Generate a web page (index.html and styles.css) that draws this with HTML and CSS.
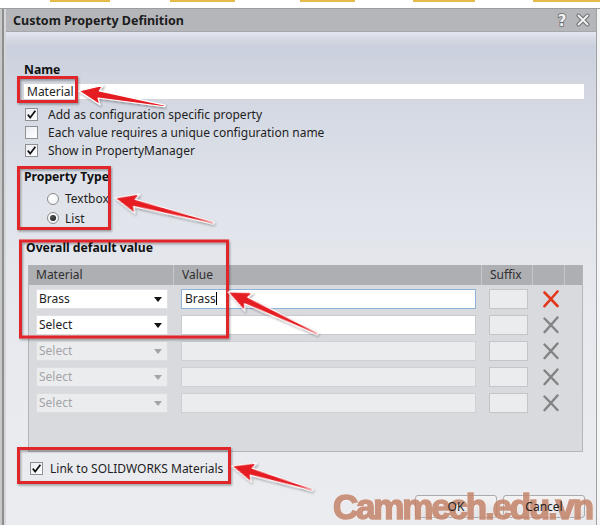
FILE: index.html
```html
<!DOCTYPE html>
<html>
<head>
<meta charset="utf-8">
<link rel="stylesheet" href="styles.css">
</head>
<body>
<div class="strip"></div>
<div class="window">
  <div class="lframe"></div>
  <div class="dialog">
    <div class="titlebar">
      <span class="title">Custom Property Definition</span>
      <span class="tb-icons">
        <svg class="tb-help" width="12" height="16" viewBox="0 0 12 16"><text x="6" y="13.5" text-anchor="middle" class="help-glyph">?</text></svg>
        <svg class="tb-close" width="14" height="14" viewBox="0 0 14 14"><path d="M2.5 2.5 L11.5 11.5 M11.5 2.5 L2.5 11.5" stroke="#6e6f72" stroke-width="4" stroke-linecap="round"/><path d="M2.5 2.5 L11.5 11.5 M11.5 2.5 L2.5 11.5" stroke="#f2f2f2" stroke-width="2" stroke-linecap="round"/></svg>
      </span>
    </div>
    <div class="content">
      <div class="label">Name</div>
      <div class="textbox name-box">Material</div>
      <div class="checks">
        <div class="row"><span class="cb"><svg width="11" height="11" viewBox="0 0 11 11"><path d="M1.8 5.6 L4.2 8.6 L9.4 1.8" fill="none" stroke="#111" stroke-width="1.7"/></svg></span><span>Add as configuration specific property</span></div>
        <div class="row"><span class="cb"></span><span>Each value requires a unique configuration name</span></div>
        <div class="row"><span class="cb"><svg width="11" height="11" viewBox="0 0 11 11"><path d="M1.8 5.6 L4.2 8.6 L9.4 1.8" fill="none" stroke="#111" stroke-width="1.7"/></svg></span><span>Show in PropertyManager</span></div>
      </div>
      <div class="label ptype">Property Type</div>
      <div class="radios">
        <div class="rrow"><span class="rb"></span><span>Textbox</span></div>
        <div class="rrow"><span class="rb on"></span><span>List</span></div>
      </div>
      <div class="label odv">Overall default value</div>
      <div class="table">
        <div class="thead">
          <div class="th">Material</div>
          <div class="th">Value</div>
          <div class="th">Suffix</div>
          <div class="th"></div>
          <div class="th"></div>
        </div>
        <div class="tbody">
          <div class="tr">
            <div class="td"><div class="select">Brass<i class="tri"></i></div></div>
            <div class="td"><div class="vbox focus">Brass<span class="caret"></span></div></div>
            <div class="td"><div class="sbox"></div></div>
            <div class="td"><svg class="xicon" width="18" height="18" viewBox="0 0 18 18"><path d="M2.5 2.5 Q8 8 15.5 16 M15.5 1.5 Q9 9 2.5 16.2" fill="none" stroke="#e2391d" stroke-width="2.6" stroke-linecap="round"/></svg></div>
            <div class="td"></div>
          </div>
          <div class="tr">
            <div class="td"><div class="select">Select<i class="tri"></i></div></div>
            <div class="td"><div class="vbox"></div></div>
            <div class="td"><div class="sbox"></div></div>
            <div class="td"><svg class="xicon" width="18" height="18" viewBox="0 0 18 18"><path d="M2.5 2.5 Q8 8 15.5 16 M15.5 1.5 Q9 9 2.5 16.2" fill="none" stroke="#828384" stroke-width="2.4" stroke-linecap="round"/></svg></div>
            <div class="td"></div>
          </div>
          <div class="tr">
            <div class="td"><div class="select dis">Select<i class="tri"></i></div></div>
            <div class="td"><div class="vbox dis"></div></div>
            <div class="td"><div class="sbox"></div></div>
            <div class="td"><svg class="xicon" width="18" height="18" viewBox="0 0 18 18"><path d="M2.5 2.5 Q8 8 15.5 16 M15.5 1.5 Q9 9 2.5 16.2" fill="none" stroke="#828384" stroke-width="2.4" stroke-linecap="round"/></svg></div>
            <div class="td"></div>
          </div>
          <div class="tr">
            <div class="td"><div class="select dis">Select<i class="tri"></i></div></div>
            <div class="td"><div class="vbox dis"></div></div>
            <div class="td"><div class="sbox"></div></div>
            <div class="td"><svg class="xicon" width="18" height="18" viewBox="0 0 18 18"><path d="M2.5 2.5 Q8 8 15.5 16 M15.5 1.5 Q9 9 2.5 16.2" fill="none" stroke="#828384" stroke-width="2.4" stroke-linecap="round"/></svg></div>
            <div class="td"></div>
          </div>
          <div class="tr">
            <div class="td"><div class="select dis">Select<i class="tri"></i></div></div>
            <div class="td"><div class="vbox dis"></div></div>
            <div class="td"><div class="sbox"></div></div>
            <div class="td"><svg class="xicon" width="18" height="18" viewBox="0 0 18 18"><path d="M2.5 2.5 Q8 8 15.5 16 M15.5 1.5 Q9 9 2.5 16.2" fill="none" stroke="#828384" stroke-width="2.4" stroke-linecap="round"/></svg></div>
            <div class="td"></div>
          </div>
        </div>
      </div>
      <div class="row link"><span class="cb"><svg width="11" height="11" viewBox="0 0 11 11"><path d="M1.8 5.6 L4.2 8.6 L9.4 1.8" fill="none" stroke="#111" stroke-width="1.7"/></svg></span><span>Link to SOLIDWORKS Materials</span></div>
      <div class="buttons">
        <div class="btn"><span class="btn-label">OK</span></div>
        <div class="btn"><span class="btn-label">Cancel</span></div>
      </div>
    </div>
  </div>
  <div class="rframe"></div>
</div>

<svg class="annot" width="600" height="525" viewBox="0 0 600 525">
  <defs>
    <filter id="sh" x="-10%" y="-10%" width="130%" height="140%">
      <feDropShadow dx="1" dy="1.5" stdDeviation="1" flood-color="#000" flood-opacity="0.35"/>
    </filter>
  </defs>
  <g fill="none" stroke="#e0262b" stroke-width="3" filter="url(#sh)">
    <rect x="18.5" y="77.5" width="58" height="24"/>
    <rect x="18.5" y="167.5" width="91" height="61"/>
    <rect x="20.5" y="241" width="207" height="96"/>
    <rect x="18.5" y="448.5" width="211" height="34"/>
  </g>
  <g fill="#e51d23" stroke="#fff" stroke-width="1.2" stroke-linejoin="round" filter="url(#sh)">
    <polygon transform="translate(79,91) rotate(9.9)" points="0,0 23,-10 20,-3.6 87,-0.8 87,0.8 20,3.6 23,10"/>
    <polygon transform="translate(115,198) rotate(14.2)" points="0,0 23,-10 20,-3.6 102,-0.8 102,0.8 20,3.6 23,10"/>
    <polygon transform="translate(228,292) rotate(25)" points="0,0 23,-10 20,-3.6 99,-0.8 99,0.8 20,3.6 23,10"/>
    <polygon transform="translate(232,466) rotate(16.5)" points="0,0 23,-10 20,-3.6 84,-0.8 84,0.8 20,3.6 23,10"/>
  </g>
</svg>
<div class="watermark">Cammech.edu.vn</div>
</body>
</html>
```

FILE: styles.css
```css
* { box-sizing: border-box; }
html, body { margin: 0; padding: 0; }
body {
  width: 600px;
  height: 525px;
  overflow: hidden;
  position: relative;
  background: #ffffff;
  font-family: "Noto Sans", "Open Sans", sans-serif;
  font-size: 12px;
  color: #1e1e1e;
}
.strip {
  height: 8px;
  background:
    linear-gradient(90deg, transparent 50px, #e7b948 50px, #e7b948 110px, transparent 110px, transparent 170px, #e7b948 170px, #e7b948 235px, transparent 235px, transparent 300px, #e7b948 300px, #e7b948 355px, transparent 355px, transparent 413px, #e7b948 413px, #e7b948 475px, transparent 475px, transparent 533px, #e7b948 533px) top / 100% 2px no-repeat,
    #ffffff;
}
.window {
  display: flex;
  height: 517px;
  border-top: 1px solid #9c9da0;
}
.lframe {
  width: 6px;
  background: linear-gradient(90deg, #c8c8c8 0 2px, #8e8e8e 2px 4px, #d4d6da 4px);
}
.rframe {
  width: 3px;
  background: #f6f6f6;
}
.dialog {
  width: 591px;
  display: flex;
  flex-direction: column;
  border-right: 1px solid #9fa0a4;
}
.titlebar {
  height: 23px;
  background: #b5b6ba;
  border-bottom: 1px solid #a6a7ab;
  display: flex;
  align-items: center;
  padding: 0 6px 0 7px;
}
.title {
  flex: 1;
  font-weight: bold;
  font-size: 12.5px;
  color: #1c1c1c;
}
.tb-icons {
  display: flex;
  align-items: center;
  gap: 8px;
}
.help-glyph {
  font-family: "DejaVu Sans", sans-serif;
  font-weight: bold;
  font-size: 15px;
  fill: #f2f2f2;
  stroke: #6e6f72;
  stroke-width: 1.6px;
  paint-order: stroke;
}
.content {
  flex: 1;
  background: linear-gradient(180deg, #e4e7ee 0px, #d6dbe5 6px, #cad0dd 14px, #d1d6e1 50px, #e0e3ea 170px, #e7e9ee 280px, #eaecf0 100%);
  padding: 30px 11px 0 18px;
  display: flex;
  flex-direction: column;
}
.label {
  font-weight: bold;
  font-size: 12.2px;
  line-height: 16px;
  height: 16px;
  color: #111;
}
.textbox {
  margin-top: 5px;
  margin-left: -1px;
  height: 17px;
  background: #fff;
  border: 1px solid #d4d6db;
  padding-left: 3px;
  line-height: 15px;
}
.checks {
  margin-top: 5px;
}
.row {
  height: 18px;
  display: flex;
  align-items: center;
  padding-left: 1px;
}
.cb {
  width: 13px;
  height: 13px;
  border: 1px solid #8f9092;
  background: linear-gradient(135deg, #e9ecf2, #ffffff);
  display: inline-flex;
  align-items: center;
  justify-content: center;
  margin-right: 10px;
  flex: none;
}
.ptype {
  margin-top: 10px;
}
.radios {
  margin-top: 4px;
  padding-left: 23px;
}
.rrow {
  height: 19.5px;
  display: flex;
  align-items: center;
}
.rb {
  width: 12px;
  height: 12px;
  border-radius: 50%;
  border: 1px solid #8a8b8d;
  background: radial-gradient(circle at 40% 35%, #ffffff, #eceef2);
  margin-right: 6px;
  display: inline-flex;
  align-items: center;
  justify-content: center;
}
.rb.on::after {
  content: "";
  width: 6px;
  height: 6px;
  border-radius: 50%;
  background: radial-gradient(circle at 40% 35%, #555, #111);
}
.odv {
  margin-top: 12px;
  margin-left: 2px;
}
.table {
  margin-top: 9px;
  margin-left: 4px;
  width: 555px;
  height: 187px;
  background: #d9dadd;
  border: 1px solid #b4b5b9;
  border-top: none;
}
.thead, .tr {
  display: grid;
  grid-template-columns: 144px 308px 51px 32px 18px;
}
.thead {
  height: 20px;
  background: #aeafb3;
}
.th {
  line-height: 20px;
  padding-left: 8px;
  color: #2e2e2e;
  border-left: 1px solid #c6c7ca;
}
.th:first-child { border-left: none; padding-left: 7px; }
.tbody {
  padding-top: 4px;
  display: flex;
  flex-direction: column;
  gap: 6px;
}
.tr { height: 20px; }
.td { display: flex; align-items: center; }
.select {
  margin-left: 7px;
  width: 132px;
  height: 20px;
  background: #fff;
  border: 1px solid #e0e1e4;
  padding-left: 2px;
  line-height: 18px;
  position: relative;
  color: #1e1e1e;
}
.tri {
  position: absolute;
  right: 5px;
  top: 7px;
  width: 0;
  height: 0;
  border-left: 4px solid transparent;
  border-right: 4px solid transparent;
  border-top: 5px solid #111;
}
.select.dis {
  background: #ebecee;
  color: #a3a4a7;
  border-color: #dcdde0;
}
.select.dis .tri { border-top-color: #a3a4a7; }
.vbox {
  margin-left: 8px;
  width: 295px;
  height: 20px;
  background: #fff;
  border: 1px solid #c9cacd;
  padding-left: 3px;
  line-height: 18px;
}
.vbox.focus { border-color: #8fb2d8; }
.vbox.dis {
  background: #ebecee;
  border-color: #cfd0d3;
}
.caret {
  display: inline-block;
  width: 1px;
  height: 13px;
  background: #000;
  vertical-align: -2px;
}
.sbox {
  margin-left: 8px;
  width: 39px;
  height: 20px;
  background: #ebecee;
  border: 1px solid #c4c5c8;
}
.xicon {
  margin-left: 10px;
}
.link {
  margin-top: 7px;
  padding-left: 6px;
}
.link .cb { margin-right: 7px; }
.buttons {
  margin-top: 18px;
  display: flex;
  justify-content: flex-end;
  gap: 6px;
}
.btn {
  width: 82px;
  height: 23px;
  border: 1px solid #a9aaad;
  border-radius: 3px;
  background: linear-gradient(#f3f3f4, #e2e3e6);
  text-align: center;
  line-height: 21px;
}
.btn-label {
  position: relative;
  z-index: 2;
  color: #1e1e1e;
}
.annot {
  position: absolute;
  left: 0;
  top: 0;
  pointer-events: none;
}
.watermark {
  position: absolute;
  left: 333px;
  top: 489px;
  font-family: "Liberation Sans", Arial, sans-serif;
  font-weight: bold;
  font-size: 35px;
  line-height: 35px;
  letter-spacing: -2.2px;
  color: #c4846a;
  -webkit-text-stroke: 1.6px #c4846a;
  text-shadow: 1px 1px 0 rgba(255,255,255,0.85), -1px -1px 0 rgba(255,255,255,0.6), 1px -1px 0 rgba(255,255,255,0.6), -1px 1px 0 rgba(255,255,255,0.6);
  white-space: nowrap;
  opacity: 0.85;
  z-index: 1;
}
```
